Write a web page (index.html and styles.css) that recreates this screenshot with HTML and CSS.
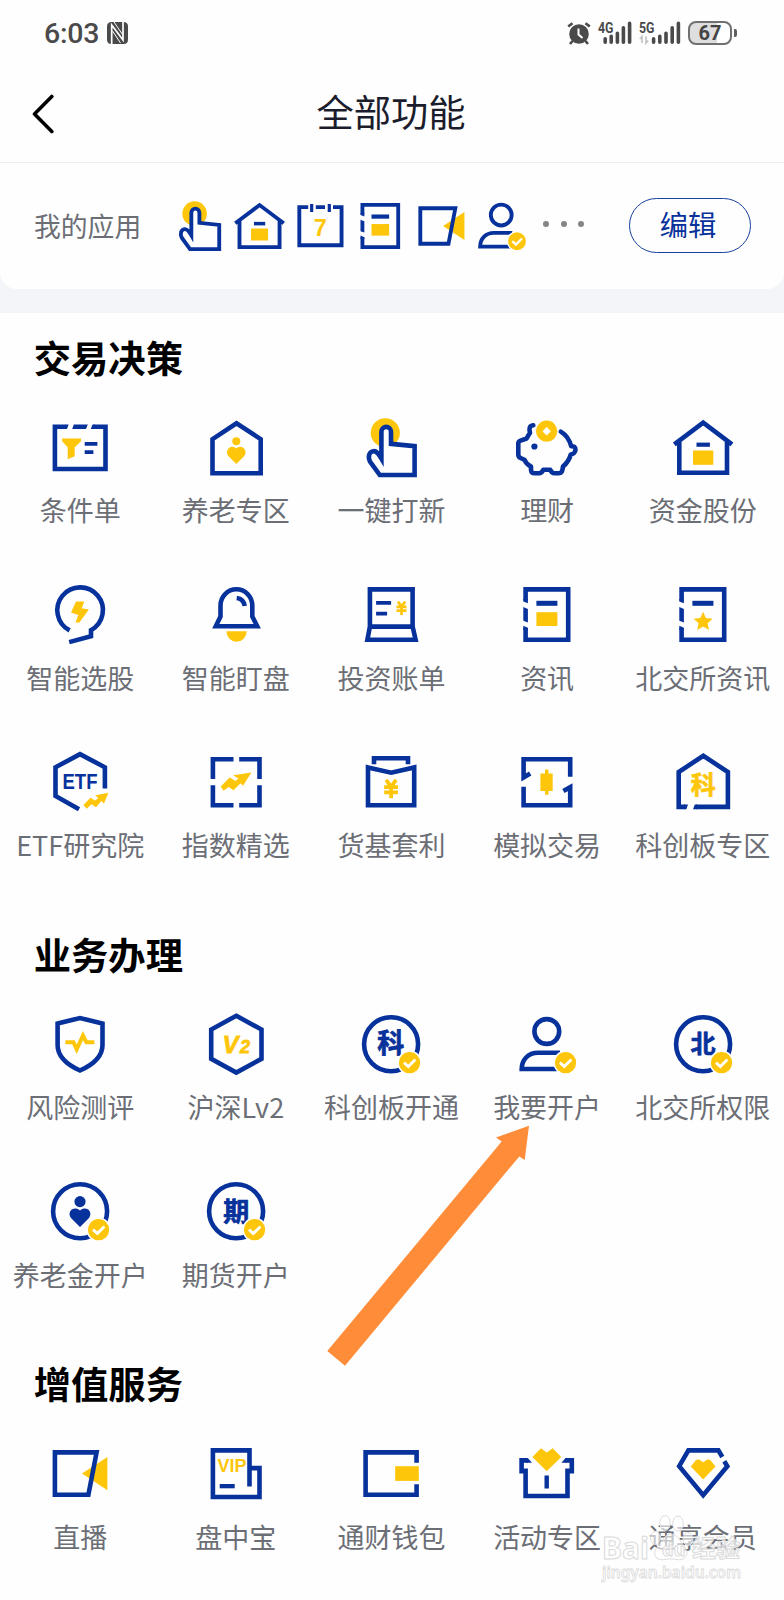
FILE: index.html
```html
<!DOCTYPE html>
<html lang="zh-CN">
<head>
<meta charset="utf-8">
<title>全部功能</title>
<link rel="stylesheet" href="styles.css">
</head>
<body>
<svg class="defs" width="0" height="0" aria-hidden="true">
  <symbol id="badge" viewBox="0 0 70 70">
    <circle class="w" cx="53.6" cy="52.7" r="12.2"/><circle class="y" cx="53.6" cy="52.7" r="10.6"/>
    <path class="tick" d="M48 52.6 L52.3 56.6 L59.4 49.4"/>
  </symbol>
  <symbol id="yen" viewBox="0 0 16 20"><path class="yl" d="M3 1 L8 8 L13 1 M1 8.4 H15 M1 13.6 H15 M8 8 V20"/></symbol>
  <symbol id="tap" viewBox="0 0 70 70">
    <circle class="y" cx="29.3" cy="19.8" r="14.6"/>
    <path class="s wf" d="M25.4 45.5 V18.7 a4.8 4.8 0 0 1 9.6 0 V30.8 L58.6 33.2 V62 H23.8 L14 48.5 C11.5 43 13.5 38.6 17.3 38.2 C20.5 37.8 22.5 40.5 25.4 45.5Z"/>
  </symbol>
  <symbol id="house" viewBox="0 0 70 70">
    <path class="s" d="M6.3 31.3 L35.2 9.6 L64 31.3 M11.3 28 V59.7 H59 V28"/>
    <rect class="b" x="28.5" y="29.6" width="13.4" height="4.2"/><rect class="y" x="25" y="37.5" width="20.3" height="14.3"/>
  </symbol>
  <symbol id="pageframe" viewBox="0 0 70 70">
    <path class="s" d="M13.6 20.5 V9.4 H56.2 V59.7 H13.6 V48"/>
    <path class="b" d="M11.3 19 H15.9 V23.2 L11.3 21.5Z M11.3 27 L15.9 29 V42.4 L11.3 40.8Z M11.3 45.8 L15.9 47.8 V50 H11.3Z"/>
    <rect class="b" x="24.4" y="20.8" width="21" height="5"/>
  </symbol>
  <symbol id="news" viewBox="0 0 70 70"><use href="#pageframe"/><rect class="y" x="24.4" y="32.2" width="21" height="13.8"/></symbol>
  <symbol id="starnews" viewBox="0 0 70 70"><use href="#pageframe"/><path class="y" d="M35.1 31.8 L37.9 38 L44.6 38.7 L39.6 43.2 L41 50 L35.1 46.5 L29.2 50 L30.6 43.2 L25.6 38.7 L32.3 38Z"/></symbol>
  <symbol id="live" viewBox="0 0 70 70">
    <path class="y" d="M37 34.5 L62.4 17.9 V51.2Z"/><path class="s" d="M9.9 13.4 H51.6 L43.4 55.7 H9.9Z"/>
  </symbol>
  <symbol id="person" viewBox="0 0 70 70">
    <circle class="s" cx="34.8" cy="21.5" r="12.4"/><path class="s" d="M48 42.7 H26 C16 42.7 9.7 50 9.7 59 H46"/><use href="#badge"/>
  </symbol>
  <symbol id="ring" viewBox="0 0 70 70"><circle class="s" cx="35.1" cy="34.2" r="27"/></symbol>
  <symbol id="filter" viewBox="0 0 70 70">
    <path class="s" d="M20.5 13.7 H9.9 V56 H60.5 V13.7 H49"/>
    <path class="b" d="M20 11.4 H23.6 L22 16 H20Z M28.8 11.4 H42.8 L41 16 H27.2Z M47.5 11.4 H50 V16 H45.8Z"/>
    <path class="y" d="M17.1 25.5 H36 V28.2 L29.7 34.2 V43.3 L22.7 46.3 V34.2 L17.1 28.2Z"/>
    <path class="s thin" d="M39.7 30.8 H52.4 M39.7 39.2 H48.4"/>
  </symbol>
  <symbol id="carehome" viewBox="0 0 70 70">
    <path class="s" d="M11.5 60.2 V26.2 L35.5 10.3 L59.7 26.2 V60.2Z"/><circle class="y" cx="35.3" cy="28.2" r="4"/>
    <path class="y" d="M35.3 51 L27.3 43 C23.5 38 29 30.5 35.3 35.4 C41.6 30.5 47.1 38 43.3 43Z"/>
  </symbol>
  <symbol id="pig" viewBox="0 0 70 70">
    <path class="s round" d="M21.3 12.2 C17 12.8 17 16 18 19.8 L14.5 25.5 L8.6 27.6 Q6.3 28.4 6.3 30.5 V41.5 Q6.3 44 8.5 45 L12.5 46.8 Q14 51 19 53.6 V57 Q19.4 60.2 22.3 60.2 H27.2 Q29.8 60.2 31.3 56.8 H38.2 Q39.7 60.2 42.3 60.2 H47 Q50 60.2 50.4 56.8 L51 53.6 Q56.8 48.5 58.8 41.5 C61 41.2 63.5 39.5 63.5 36.8 C63.5 34 62 33.2 59.2 33.3 Q56.8 23.5 48.8 18.6"/>
    <circle class="b" cx="22.4" cy="33.5" r="3.1"/><circle class="y" cx="34.7" cy="18.2" r="10.6"/><path class="w" d="M34.7 14 L38.9 18.2 L34.7 22.4 L30.5 18.2Z"/>
  </symbol>
  <symbol id="bulb" viewBox="0 0 70 70">
    <path class="s" d="M24.6 50.4 A22.8 22.8 0 1 1 46 50.2 V56.2 L24.2 62.1"/>
    <path class="y" d="M31 21.6 H39.4 L36.7 28.2 L43.9 29.4 L34.4 42.6 H30.5 L33.3 34.9 L26 32.6Z"/>
  </symbol>
  <symbol id="bell" viewBox="0 0 70 70">
    <path class="s" d="M14.8 46.2 L19.5 36.5 V25.5 a15.9 16.2 0 0 1 31.8 0 V36.5 L56.2 46.2Z M35.7 18 Q42.6 18.8 43.7 26"/>
    <path class="y" d="M25.4 51.2 H45.7 a10.15 10.6 0 0 1 -20.3 0Z"/>
  </symbol>
  <symbol id="bill" viewBox="0 0 70 70">
    <path class="s" d="M13.9 46.6 V9.4 H56.6 V46.6Z M13.9 46.6 L11.4 59.7 H59.6 L56.6 46.6"/>
    <path class="s thin" d="M20.1 22.9 H35.1 M20.1 33.6 H31.1"/><use href="#yen" x="39.8" y="20.8" width="11.5" height="14.4"/>
  </symbol>
  <symbol id="index" viewBox="0 0 70 70">
    <path class="s" d="M32.5 11.3 H11.9 V31 M38.2 11.3 H58.5 V31 M11.9 37.2 V57.2 H32.5 M58.5 37.2 V57.2 H38.2"/>
    <path class="y" d="M19.7 38.6 L28.7 29.4 L34.6 33 L37.4 30.6 L32 27.3 L50.4 24.4 L42 37.8 L39.5 35.2 L32.5 42.3 L27.6 39 L22.6 42.8Z"/>
  </symbol>
  <symbol id="fund" viewBox="0 0 70 70">
    <path class="s" d="M12 19.4 L35.2 24.7 L58.2 19.4 V57.2 H12Z M18 16.2 V10.3 H52 V16.2"/><use href="#yen" x="27.2" y="30.8" width="15.8" height="19.8"/>
  </symbol>
  <symbol id="trade" viewBox="0 0 70 70">
    <path class="s" d="M18.2 25.5 L11.6 29.5 V11.3 H58.2 V28.8 M11.6 38.8 V57.2 H58.2 V39.2 L51.4 43"/>
    <path class="y" d="M33 21.4 H36.4 V25.4 H40.7 V43.1 H36.4 V46.8 H33 V43.1 H28.4 V25.4 H33Z"/>
  </symbol>
  <symbol id="shield" viewBox="0 0 70 70">
    <path class="s" d="M12.6 13.6 L35 8 L57.5 13.6 V35 C57.5 48 46 55.6 35 60.5 C24 55.6 12.6 48 12.6 35Z"/>
    <path class="yl pulse" d="M20.4 32.2 H28.4 L31.7 39.3 L38 25.5 L41.4 32.2 H49.4"/>
  </symbol>
  <symbol id="ccare" viewBox="0 0 70 70"><use href="#ring"/><circle class="b" cx="35" cy="24.6" r="5.6"/>
    <path class="b" d="M35 50 L26 41 C21.5 35 28.5 28 35 33.4 C41.5 28 48.5 35 44 41Z"/><use href="#badge"/></symbol>
  <symbol id="wallet" viewBox="0 0 70 70"><path class="s" d="M60.6 23.8 V13.4 H9.6 V55.7 H60.6 V45.2"/><rect class="y" x="39.2" y="27.2" width="23.6" height="14.7"/></symbol>
  <symbol id="gift" viewBox="0 0 70 70">
    <path class="s" d="M16 21.4 H9.6 V32.3 H13.6 M13.6 29.5 V57 H55.5 V29.5 M53.5 21.4 H59.8 V32.3 H55.5"/>
    <path class="b" d="M14 19.1 H15.8 L20 23.7 H14Z M55 19.1 H53.6 L49.4 23.7 H55Z"/>
    <path class="y" d="M20.4 17.9 L29 9.2 L34.7 13.5 L40.7 9.2 L49.2 17.9 L34.7 32.2Z"/><rect class="b" x="32.5" y="36.5" width="4.4" height="13"/>
  </symbol>
  <symbol id="gem" viewBox="0 0 70 70">
    <path class="s" d="M54.3 18 L50.4 11.4 H20.4 L11.2 27.2 L35.2 56.2 L59.3 27.2 L56.3 22.3"/>
    <path class="y" d="M22.8 27.5 L28 21 Q29.3 20 31 20.6 L35.1 23.2 L39.3 20.6 Q41 20 42.3 21 L47.5 27.5 L35.1 40.5Z"/>
  </symbol>
</svg>

<div class="screen">
  <div class="status">
    <span class="clock">6:03</span>
    <svg class="nfc" viewBox="0 0 21 22"><path class="g" d="M4.5 0 H14 L17 22 H4.5 Q0 22 0 17.5 V4.5 Q0 0 4.5 0Z"/><path class="g" d="M12 0 H16.5 Q21 0 21 4.5 V17.5 Q21 22 16.5 22 H12Z"/><path d="M4.7 22 V3 L16 18 V0" fill="none" stroke="#fff" stroke-width="1.7"/><path d="M7 0 L15.5 12.5 M5.5 9 L13.5 21" fill="none" stroke="#fff" stroke-width="1"/></svg>
    <span class="grow"></span>
    <svg class="alarm" viewBox="0 0 24 23"><circle class="g" cx="12" cy="12" r="9.8"/><path d="M1.2 4.6 L5.5 1.2 M22.8 4.6 L18.5 1.2 M5.5 19 L3 22 M18.5 19 L21 22" stroke="#4a4a4a" stroke-width="2.6"/><path d="M11.5 6.5 V12.5 L15.5 16" fill="none" stroke="#fff" stroke-width="2"/></svg>
    <svg class="signal" viewBox="0 0 35 24"><text class="net" x="0" y="12" textLength="15.5" lengthAdjust="spacingAndGlyphs">4G</text><path class="bars" d="M7.2 17.8 V21.2 M13.2 15.2 V21.2 M19.4 12.2 V21.2 M25.4 6.8 V21.2 M31.6 2.4 V21.2"/></svg>
    <svg class="signal second" viewBox="0 0 43 24"><text class="net" x="0" y="12" textLength="15.5" lengthAdjust="spacingAndGlyphs">5G</text><path d="M3 22 V15.5 L.8 18 M7 15.5 V22 L9.2 19.5" fill="none" stroke="#c4c4c4" stroke-width="1.7"/><path class="bars" d="M14.6 17.8 V21.2 M20.8 15.2 V21.2 M27 12.2 V21.2 M33.2 6.8 V21.2 M39.4 2.4 V21.2"/></svg>
    <span class="battery">67</span><i class="nub"></i>
  </div>
  <header class="bar">
    <svg class="back" viewBox="0 0 24 40"><path d="M20.8 2.5 L3.5 20 L20.8 37.5"/></svg>
    <h1>全部功能</h1>
  </header>
  <div class="mine-wrap">
    <section class="mine">
      <span class="mine-label">我的应用</span>
      <div class="mini">
        <svg><use href="#tap"/></svg><svg><use href="#house"/></svg><svg viewBox="0 0 70 70">
          <path class="s" d="M20.5 12 H9.9 V57.4 H60.2 V12 H50 M29.5 12 H40.5"/>
          <path class="s thin" d="M24.6 8.3 V17.8 M45.6 8.3 V17.8"/>
          <text class="t y" x="35" y="46.3" font-size="28">7</text>
        </svg><svg><use href="#news"/></svg><svg><use href="#live"/></svg><svg><use href="#person"/></svg>
      </div>
      <div class="dots"><i></i><i></i><i></i></div>
      <button class="edit">编辑</button>
    </section>
  </div>
  <main>
    <h2>交易决策</h2>
    <div class="grid">
      <div class="item"><svg><use href="#filter"/></svg><span>条件单</span></div>
      <div class="item"><svg><use href="#carehome"/></svg><span>养老专区</span></div>
      <div class="item"><svg><use href="#tap"/></svg><span>一键打新</span></div>
      <div class="item"><svg><use href="#pig"/></svg><span>理财</span></div>
      <div class="item"><svg><use href="#house"/></svg><span>资金股份</span></div>
      <div class="item"><svg><use href="#bulb"/></svg><span>智能选股</span></div>
      <div class="item"><svg><use href="#bell"/></svg><span>智能盯盘</span></div>
      <div class="item"><svg><use href="#bill"/></svg><span>投资账单</span></div>
      <div class="item"><svg><use href="#news"/></svg><span>资讯</span></div>
      <div class="item"><svg><use href="#starnews"/></svg><span>北交所资讯</span></div>
      <div class="item"><svg viewBox="0 0 70 70">
        <path class="s" d="M59.9 40.4 V19.3 L35 6.2 L10.5 19.3 V48 L34 61.2"/>
        <text class="t b" x="35" y="41.2" font-size="22.5" textLength="35" lengthAdjust="spacingAndGlyphs">ETF</text>
        <path class="y" d="M38.4 57.1 L45.4 49.8 L50 52.6 L53.2 50.2 L50.4 47.2 L63.4 44.8 L59 55.4 L56.4 53 L51 59.2 L46.4 56.3 L41.7 60.8Z"/>
      </svg><span>ETF研究院</span></div>
      <div class="item"><svg><use href="#index"/></svg><span>指数精选</span></div>
      <div class="item"><svg><use href="#fund"/></svg><span>货基套利</span></div>
      <div class="item"><svg><use href="#trade"/></svg><span>模拟交易</span></div>
      <div class="item"><svg viewBox="0 0 70 70">
        <path class="s" d="M17 58.9 H10.7 V24 L35.3 7.8 L59.9 24 V58.9 H28"/><path class="b" d="M16 56.6 H20 L18.4 61.2 H16Z M26.8 56.6 H29 V61.2 H25Z"/>
        <text class="t y heavy" x="35.3" y="45.6" font-size="25">科</text>
      </svg><span>科创板专区</span></div>
    </div>
    <h2>业务办理</h2>
    <div class="grid">
      <div class="item"><svg><use href="#shield"/></svg><span>风险测评</span></div>
      <div class="item"><svg viewBox="0 0 70 70">
        <path class="s" d="M35.3 5.8 L60.5 19.5 V48.8 L35.3 62.6 L10.2 48.8 V19.5Z"/>
        <text class="t y it" x="29.6" y="43.3" font-size="24">V</text><text class="t y it" x="44" y="43.3" font-size="18">2</text>
      </svg><span>沪深Lv2</span></div>
      <div class="item"><svg viewBox="0 0 70 70"><use href="#ring"/><text class="t b heavyb" x="34.8" y="43" font-size="27">科</text><use href="#badge"/></svg><span>科创板开通</span></div>
      <div class="item"><svg><use href="#person"/></svg><span>我要开户</span></div>
      <div class="item"><svg viewBox="0 0 70 70"><use href="#ring"/><text class="t b heavyb" x="35" y="42.8" font-size="25">北</text><use href="#badge"/></svg><span>北交所权限</span></div>
      <div class="item"><svg><use href="#ccare"/></svg><span>养老金开户</span></div>
      <div class="item"><svg viewBox="0 0 70 70"><use href="#ring"/><text class="t b heavyb" x="35.3" y="44" font-size="26">期</text><use href="#badge"/></svg><span>期货开户</span></div>
    </div>
    <h2>增值服务</h2>
    <div class="grid">
      <div class="item"><svg><use href="#live"/></svg><span>直播</span></div>
      <div class="item"><svg viewBox="0 0 70 70">
        <path class="s" d="M48.5 47.5 V11.4 H11.9 V58 H58.5 V29.1 H49"/><rect class="b" x="18.7" y="45" width="15" height="4.3"/>
        <text class="t y" x="31" y="33.3" font-size="17.5" textLength="29" lengthAdjust="spacingAndGlyphs">VIP</text>
      </svg><span>盘中宝</span></div>
      <div class="item"><svg><use href="#wallet"/></svg><span>通财钱包</span></div>
      <div class="item"><svg><use href="#gift"/></svg><span>活动专区</span></div>
      <div class="item"><svg><use href="#gem"/></svg><span>通享会员</span></div>
    </div>
  </main>
  <svg class="pointer" viewBox="0 0 206 244"><path d="M2.3 227 L176.7 17.6 L171 13.5 L204 1.7 L199.7 36 L194.3 32.4 L20 241.7Z"/></svg>
  <svg class="mark" viewBox="0 0 150 75">
    <text class="mk big" x="1" y="45" textLength="47" lengthAdjust="spacingAndGlyphs">Bai</text>
    <g class="paw"><ellipse cx="54.5" cy="24" rx="5" ry="6.5"/><ellipse cx="64" cy="9" rx="5.2" ry="7.5"/><ellipse cx="77" cy="9.5" rx="5.2" ry="7.5"/><ellipse cx="87" cy="25" rx="5" ry="6.5"/><path d="M70 20 C76 20 79 27 83 32 C90 41 83 47 76 45.5 Q70 44 64 45.5 C55 47 50 40 57 32 C61 27 64 20 70 20Z"/></g>
    <text class="mk du" x="61" y="42">du</text>
    <text class="mk cn" x="91" y="43" textLength="48">经验</text>
    <text class="mk url" x="1" y="64" textLength="139" lengthAdjust="spacingAndGlyphs">jingyan.baidu.com</text>
  </svg>
</div>
</body>
</html>
```
FILE: styles.css
```css
* { box-sizing: border-box; }
body {
  margin: 0;
  background: #fefefe;
  font-family: "Noto Sans CJK SC", "Noto Sans", sans-serif;
  color: #6c6e76;
}
.defs { position: absolute; }
.screen { position: relative; width: 784px; height: 1600px; overflow: hidden; }

/* icon drawing classes */
.s { fill: none; stroke: #07319b; stroke-width: 4.6; }
.wf { fill: #fefefe; }
.thin { stroke-width: 3.8; }
.round { stroke-linejoin: round; stroke-linecap: round; }
.b { fill: #07319b; }
.y { fill: #fec60a; }
.w { fill: #fefefe; }
.yl { fill: none; stroke: #fec60a; stroke-width: 3.8; }
.pulse { stroke-width: 4; }
.tick { fill: none; stroke: #fff; stroke-width: 2.8; }
.t { font-family: "Liberation Sans", "Noto Sans CJK SC", sans-serif; font-weight: 700; text-anchor: middle; }
.it { font-style: italic; stroke: #fec60a; stroke-width: .8; }
.heavy { stroke: #fec60a; stroke-width: .7; }
.heavyb { stroke: #07319b; stroke-width: .7; }

/* status bar */
.status { display: flex; height: 66px; padding: 0 47px 0 44px; align-items: center; }
.clock { width: 56px; padding-top: 1px; font: 500 28.5px/34px Roboto, sans-serif; color: #4a4a4a; letter-spacing: -.2px; }
.g { fill: #4a4a4a; }
.nfc { width: 21px; height: 22px; margin-left: 7px; }
.grow { flex: 1; }
.alarm { width: 24px; height: 23px; margin-right: 7px; }
.signal { width: 35px; height: 24px; }
.second { width: 43px; margin: 0 6px; }
.net { font: 700 14px Roboto, sans-serif; fill: #4a4a4a; }
.bars { fill: none; stroke: #4a4a4a; stroke-width: 3.6; stroke-linecap: round; }
.battery {
  width: 44px; height: 24px; border: 2px solid #707070; border-radius: 8px;
  background: linear-gradient(90deg, #dedede 67%, #fff 67%);
  text-align: center; font: 700 20px/21px Roboto, sans-serif; color: #444;
}
.nub { width: 3px; height: 8px; margin-left: 2px; border-radius: 0 2px 2px 0; background: #606060; }

/* title bar */
.bar { position: relative; display: flex; justify-content: center; align-items: center; height: 97px; padding: 0 2px 6px 0; border-bottom: 1px solid #eee; }
.bar h1 { margin: 0; color: #1b1d2c; font-size: 37.3px; line-height: 54px; font-weight: 400; }
.back { position: absolute; left: 30.5px; top: 28px; width: 24px; height: 40px; fill: none; stroke: #000; stroke-width: 3.6; stroke-linecap: round; stroke-linejoin: round; }

/* my apps */
.mine-wrap { height: 150px; background: #f4f5f9; }
.mine { display: flex; align-items: center; height: 125.5px; padding: 0 33.5px 0 34px; border-radius: 0 0 17px 17px; background: #fefefe; }
.mine-label { width: 135.5px; font-size: 26.8px; line-height: 40px; }
.mini { display: flex; gap: 1.8px; padding-top: 1px; }
.mini svg { width: 58.8px; height: 58.8px; }
.dots { display: flex; gap: 11.8px; padding: 0 0 4px 11.5px; }
.dots i { width: 6px; height: 6px; border-radius: 50%; background: #858585; }
.edit {
  width: 122px; height: 55px; margin-left: auto; padding: 0 3px 3px 0;
  border: 1.3px solid #17409f; border-radius: 28px; background: #fefefe;
  color: #07319b; font: 400 28.3px/40px "Noto Sans CJK SC", sans-serif;
}

/* function sections */
main { padding: 19.5px 3px 0 2.4px; }
h2 { margin: 0 0 32px 31.4px; color: #000; font-size: 37.3px; line-height: 48px; font-weight: 700; }
.grid { display: grid; grid-template-columns: repeat(5, 155.65px); row-gap: 49.2px; margin-bottom: 63.4px; }
.item { display: flex; flex-direction: column; align-items: center; height: 118.5px; }
.item svg { width: 70px; height: 70px; }
.item span { margin-top: 7.4px; font-size: 27px; line-height: 40px; white-space: nowrap; }

/* overlays */
.pointer { position: absolute; left: 325px; top: 1124px; width: 206px; height: 244px; fill: #ff8c39; }
.mark { position: absolute; left: 601px; top: 1514px; width: 150px; height: 75px; }
.mk { fill: #fff; fill-opacity: .7; stroke: #dadada; stroke-width: 1; font-family: "Noto Sans", "Noto Sans CJK SC", sans-serif; font-weight: 700; }
.big { font-size: 30px; }
.du { font-size: 18px; }
.cn { font-size: 24px; }
.url { font-size: 16px; stroke-width: .8; font-weight: 600; }
.paw { fill: #fff; fill-opacity: .6; stroke: #dcdcdc; stroke-width: 1; }
```
